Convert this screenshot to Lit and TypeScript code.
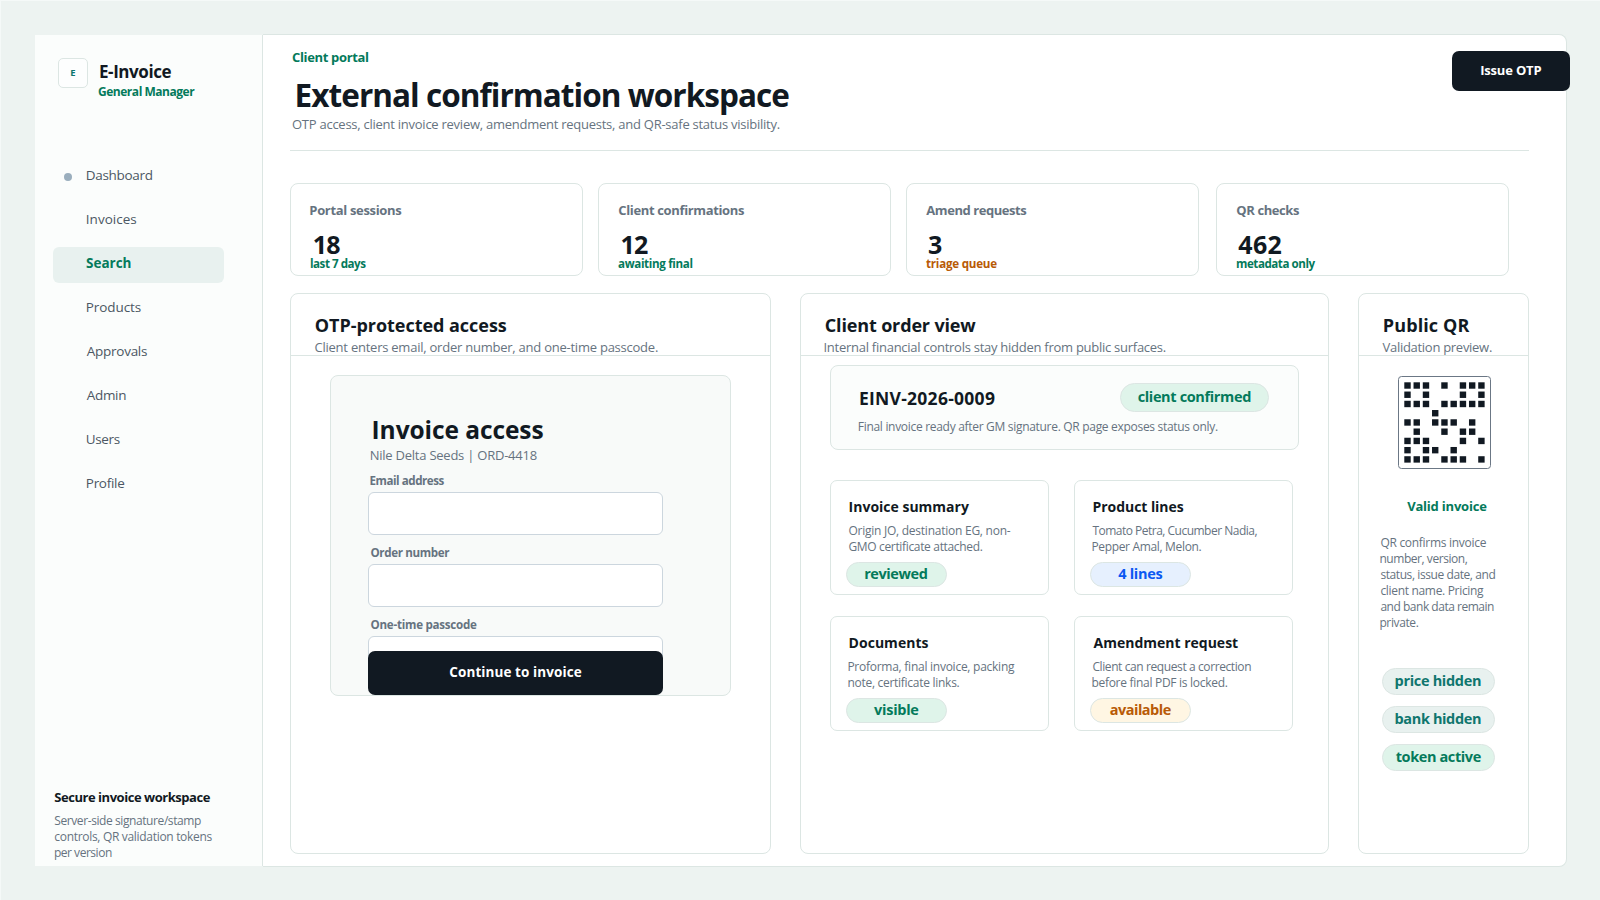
import { LitElement, html, css, svg } from "lit";
import { customElement, property } from "lit/decorators.js";
import { classMap } from "lit/directives/class-map.js";

const FAMILY = '"Open Sans", "Noto Sans", sans-serif';
const pen = document.createElement("canvas").getContext("2d")!;

/** One line of text, tracked so that its ink spans `w` pixels and starts at `x`. */
@customElement("ui-text")
class UiText extends LitElement {
  @property() t = "";
  @property({ type: Number }) w = 0;
  @property({ type: Number }) s = 13;
  @property({ type: Number }) x = 0;
  @property({ type: Boolean }) bold = false;

  static styles = css`
    :host {
      display: block;
      line-height: 20px;
      white-space: pre;
      flex: none;
    }
    span {
      display: block;
      width: fit-content;
    }
  `;

  render() {
    const weight = this.bold ? 700 : 400;
    pen.font = `${weight} ${this.s}px ${FAMILY}`;
    const m = pen.measureText(this.t);
    const ink = m.actualBoundingBoxRight + m.actualBoundingBoxLeft;
    const n = this.t.length - 1;
    const ls = n > 0 && this.w ? (this.w - ink) / n : 0;
    const ml = this.x + m.actualBoundingBoxLeft;
    return html`<span
      style="font-size:${this.s}px;font-weight:${weight};letter-spacing:${ls.toFixed(3)}px;margin-left:${ml.toFixed(2)}px;margin-right:${(-ls).toFixed(3)}px"
      >${this.t}</span
    >`;
  }
}

const line = (cls: string, t: string, w: number, s: number, x = 0, bold = false) =>
  html`<ui-text class=${cls} .t=${t} .w=${w} .s=${s} .x=${x} ?bold=${bold}></ui-text>`;

const NAV: [string, number][] = [
  ["Dashboard", 65.9],
  ["Invoices", 49.5],
  ["Search", 44.5],
  ["Products", 54],
  ["Approvals", 60.2],
  ["Admin", 39.4],
  ["Users", 32.9],
  ["Profile", 37.4],
];

const STATS = [
  { label: "Portal sessions", lw: 91, value: "18", vw: 26.5, vx: 22.8, note: "last 7 days", nw: 56.2, tone: "green" },
  { label: "Client confirmations", lw: 125.7, value: "12", vw: 26.5, vx: 22.5, note: "awaiting final", nw: 74.4, tone: "green" },
  { label: "Amend requests", lw: 100, value: "3", vw: 0, vx: 21, note: "triage queue", nw: 71.2, tone: "amber" },
  { label: "QR checks", lw: 62.7, value: "462", vw: 43.4, vx: 21.2, note: "metadata only", nw: 79.5, tone: "green" },
];

const FIELDS: [string, number][] = [
  ["Email address", 74],
  ["Order number", 79.8],
  ["One-time passcode", 106.6],
];

const CARDS = [
  { title: "Invoice summary", tw: 119.3, lines: [["Origin JO, destination EG, non-", 162.4], ["GMO certificate attached.", 134.3]], pill: "reviewed", pw: 62.5, tone: "green" },
  { title: "Product lines", tw: 90.1, lines: [["Tomato Petra, Cucumber Nadia,", 165], ["Pepper Amal, Melon.", 109.2]], pill: "4 lines", pw: 44.4, tone: "blue" },
  { title: "Documents", tw: 78.9, lines: [["Proforma, final invoice, packing", 166.6], ["note, certificate links.", 111.2]], pill: "visible", pw: 44.2, tone: "green" },
  { title: "Amendment request", tw: 144.5, lines: [["Client can request a correction", 158.8], ["before final PDF is locked.", 135.3]], pill: "available", pw: 61, tone: "amber" },
] as { title: string; tw: number; lines: [string, number][]; pill: string; pw: number; tone: string }[];

const QR_NOTE: [string, number][] = [
  ["QR confirms invoice", 106.3],
  ["number, version,", 87.3],
  ["status, issue date, and", 115],
  ["client name. Pricing", 103.7],
  ["and bank data remain", 113.7],
  ["private.", 38.3],
];

const QR = ["111010111", "101000101", "111011111", "000100000", "110111010", "010010110", "111000101", "101101000", "111011101"];

@customElement("app-root")
class AppRoot extends LitElement {
  static styles = css`
    :host {
      display: block;
      box-sizing: border-box;
      width: 1600px;
      height: 900px;
      padding: 34px 33px 33px 35px;
      background: #edf3f1;
      font-family: "Open Sans", "Noto Sans", sans-serif;
      color: #111922;
      box-shadow: inset 1px 1px 0 #f5f9f8;
    }
    * {
      box-sizing: border-box;
    }
    .window {
      display: flex;
      height: 833px;
    }
    .sidebar {
      display: flex;
      flex-direction: column;
      width: 228px;
      margin: 1px 0;
      background: #fbfdfc;
      border-right: 1px solid #dce6e3;
    }
    .brand {
      display: flex;
      padding: 23px 0 0 23px;
      height: 123.6px;
    }
    .logo {
      width: 30px;
      height: 30px;
      border: 1px solid #dce6e3;
      border-radius: 5px;
      background: #fdfefe;
      color: #0f766e;
      padding: 4px 0 0 11.3px;
    }
    .brand-name {
      margin-top: 4px;
    }
    .green {
      color: #047a5b;
    }
    .amber {
      color: #b85a06;
    }
    .gray {
      color: #667380;
    }
    .nav {
      display: grid;
      gap: 8px;
      padding-left: 17.8px;
    }
    .nav-item {
      display: flex;
      width: 171.5px;
      height: 36px;
      padding: 6.4px 0 0 10.2px;
      border-radius: 6px;
      color: #4b5763;
    }
    .nav-item.active {
      background: #e8f1ef;
      color: #047a5b;
    }
    .dot {
      width: 8px;
      height: 8px;
      margin: 8px 16.5px 0 1px;
      border-radius: 50%;
    }
    .dot.on {
      background: #9aaebd;
    }
    .foot {
      margin-top: auto;
      padding-bottom: 5px;
    }
    .foot-title {
      margin-bottom: 6px;
    }
    .tight {
      line-height: 16px;
    }
    .main {
      flex: 1;
      padding-left: 27px;
      background: #fff;
      border: 1px solid #dce6e3;
      border-left: 0;
      border-radius: 0 8px 8px 0;
    }
    .header {
      display: flex;
      justify-content: space-between;
      width: 1239px;
      height: 116px;
      border-bottom: 1px solid #dce6e3;
    }
    .eyebrow {
      margin-top: 12px;
    }
    .title {
      margin-top: 18px;
    }
    .subtitle {
      margin-top: 9px;
    }
    .button {
      display: flex;
      justify-content: center;
      background: #111922;
      color: #fff;
      border-radius: 7px;
    }
    .issue {
      width: 118px;
      height: 40px;
      margin: 15.5px -41.4px 0 0;
      padding-top: 9.5px;
    }
    .stats {
      display: grid;
      grid-template-columns: 308px 308px 310px 293px;
      margin-top: 32px;
    }
    .stat {
      width: 293px;
      height: 93px;
      border: 1px solid #dce6e3;
      border-radius: 8px;
      padding-top: 16px;
    }
    .stat-value {
      margin-top: 14px;
    }
    .panels {
      display: grid;
      grid-template-columns: 481px 529px 171px;
      gap: 29px;
      margin-top: 17px;
    }
    .panel {
      height: 561px;
      border: 1px solid #dce6e3;
      border-radius: 8px;
    }
    .panel-head {
      height: 62px;
      padding-top: 21px;
      border-bottom: 1px solid #dce6e3;
    }
    .panel-sub {
      margin-top: 2px;
    }
    .login {
      width: 401px;
      height: 321px;
      margin: 19px 0 0 39px;
      padding-top: 44px;
      background: #f8faf9;
      border: 1px solid #dce6e3;
      border-radius: 8px;
    }
    .login-sub {
      margin: 5px 0 6px;
    }
    .field {
      height: 72px;
    }
    .input {
      width: 295px;
      height: 43px;
      margin: 1px 0 0 37px;
      background: #fff;
      border: 1px solid #ccd6de;
      border-radius: 6px;
    }
    .continue {
      position: relative;
      width: 295px;
      height: 44px;
      margin: -36.4px 0 0 37px;
      padding-top: 11.6px;
    }
    .invoice {
      display: flex;
      justify-content: space-between;
      width: 469px;
      height: 85px;
      margin: 9px 0 0 29px;
      padding: 17px 29px 0 0;
      background: #fbfdfc;
      border: 1px solid #dce6e3;
      border-radius: 8px;
    }
    .invoice-text {
      width: 260px;
    }
    .invoice-id {
      margin: 5px 0 9px;
    }
    .pill {
      display: flex;
      justify-content: center;
      border: 1px solid #dce6e3;
      border-radius: 15px;
    }
    .pill.green {
      background: #dff4ea;
    }
    .pill.blue {
      background: #e6f0fe;
      color: #0a58f2;
    }
    .pill.amber {
      background: #fff6e3;
    }
    .pill.teal {
      background: #e8f1ef;
      color: #0f766e;
    }
    .pill.large {
      flex: none;
      width: 149px;
      height: 29px;
      padding-top: 3px;
    }
    .cards {
      display: grid;
      grid-template-columns: 219px 219px;
      gap: 21px 25px;
      margin: 30px 0 0 29px;
    }
    .card {
      height: 115px;
      border: 1px solid #dce6e3;
      border-radius: 7px;
      padding-top: 16px;
    }
    .card-title {
      margin-bottom: 6px;
    }
    .card .pill {
      width: 101px;
      height: 25px;
      margin: 7px 0 0 15px;
      padding-top: 1px;
    }
    .qr {
      display: block;
      margin: 20px 0 27px 39px;
    }
    .qr-note {
      margin-top: 19px;
    }
    .flags {
      display: grid;
      gap: 11px;
      margin: 37px 0 0 23px;
    }
    .flags .pill {
      width: 113px;
      height: 27px;
      padding-top: 2px;
    }
  `;

  private head(title: string, tw: number, sub: string, sw: number) {
    return html`<div class="panel-head">
      ${line("", title, tw, 18, 24.8, true)} ${line("panel-sub gray", sub, sw, 13, 23.5)}
    </div>`;
  }

  private sidebar() {
    return html`<aside class="sidebar">
      <div class="brand">
        <div class="logo">${line("", "E", 0, 9.5, 0, true)}</div>
        <div class="brand-name">
          ${line("", "E-Invoice", 71.5, 17, 12, true)} ${line("green", "General Manager", 97.2, 12, 10, true)}
        </div>
      </div>
      <nav class="nav">
        ${NAV.map(
          ([t, w], i) => html`<div class=${classMap({ "nav-item": true, active: t === "Search" })}>
            <i class=${classMap({ dot: true, on: i === 0 })}></i>${line("", t, w, 13.5, t === "Search" ? -2.4 : -1.7, t === "Search")}
          </div>`
        )}
      </nav>
      <div class="foot">
        ${line("foot-title", "Secure invoice workspace", 156.4, 13, 19.3, true)}
        ${line("tight gray", "Server-side signature/stamp", 146.7, 12, 19.3)}
        ${line("tight gray", "controls, QR validation tokens", 158.2, 12, 19.3)}
        ${line("tight gray", "per version", 57, 12, 19.9)}
      </div>
    </aside>`;
  }

  private qrCode() {
    return html`<svg class="qr" width="93" height="93" viewBox="0 0 93 93">
      <rect x="0.5" y="0.5" width="92" height="92" rx="3" fill="#fff" stroke="#6b7785" />
      ${QR.map((row, r) =>
        [...row].map((c, k) =>
          c === "1"
            ? svg`<rect x=${6.3 + k * 9.24} y=${6.3 + r * 9.24} width="6.4" height="6.4" fill="#111922" />`
            : null
        )
      )}
    </svg>`;
  }

  render() {
    return html`<div class="window">
      ${this.sidebar()}
      <main class="main">
        <header class="header">
          <div>
            ${line("eyebrow green", "Client portal", 76.1, 13, 2, true)}
            ${line("title", "External confirmation workspace", 492.6, 31.5, 6.6, true)}
            ${line("subtitle gray", "OTP access, client invoice review, amendment requests, and QR-safe status visibility.", 487.6, 13, 2)}
          </div>
          <div class="button issue">${line("", "Issue OTP", 60.3, 13, 0, true)}</div>
        </header>
        <section class="stats">
          ${STATS.map(
            (s) => html`<div class="stat">
              ${line("gray", s.label, s.lw, 13, 19.3, true)} ${line("stat-value", s.value, s.vw, 25, s.vx, true)}
              ${line(s.tone, s.note, s.nw, 11.6, 19, true)}
            </div>`
          )}
        </section>
        <section class="panels">
          <div class="panel">
            ${this.head("OTP-protected access", 191, "Client enters email, order number, and one-time passcode.", 343.4)}
            <div class="login">
              ${line("", "Invoice access", 169.8, 24.5, 42.6, true)}
              ${line("login-sub gray", "Nile Delta Seeds | ORD-4418", 166, 13, 39.7)}
              ${FIELDS.map(
                ([t, w]) => html`<div class="field">
                  ${line("gray", t, w, 11.6, 39.5, true)}
                  <div class="input"></div>
                </div>`
              )}
              <div class="button continue">${line("", "Continue to invoice", 132.4, 13.5, 0, true)}</div>
            </div>
          </div>
          <div class="panel">
            ${this.head("Client order view", 150.5, "Internal financial controls stay hidden from public surfaces.", 341.3)}
            <div class="invoice">
              <div class="invoice-text">
                ${line("invoice-id", "EINV-2026-0009", 135, 17.5, 28.9, true)}
                ${line("gray", "Final invoice ready after GM signature. QR page exposes status only.", 359.2, 12, 27.8)}
              </div>
              <div class="pill large green">${line("", "client confirmed", 113.5, 14.5, 0, true)}</div>
            </div>
            <div class="cards">
              ${CARDS.map(
                (c) => html`<div class="card">
                  ${line("card-title", c.title, c.tw, 14, 18.6, true)}
                  ${c.lines.map(([t, w]) => line("tight gray", t, w, 12, 17.4))}
                  <div class="pill ${c.tone}">${line("", c.pill, c.pw, 14.5, 0, true)}</div>
                </div>`
              )}
            </div>
          </div>
          <div class="panel">
            ${this.head("Public QR", 85.6, "Validation preview.", 109.4)} ${this.qrCode()}
            ${line("green", "Valid invoice", 80, 13, 48.2, true)}
            <div class="qr-note gray">${QR_NOTE.map(([t, w]) => line("tight", t, w, 12, 21.4))}</div>
            <div class="flags">
              <div class="pill teal">${line("", "price hidden", 85.4, 14.5, 0, true)}</div>
              <div class="pill teal">${line("", "bank hidden", 85.4, 14.5, 0, true)}</div>
              <div class="pill green">${line("", "token active", 85, 14.5, 0, true)}</div>
            </div>
          </div>
        </section>
      </main>
    </div>`;
  }
}
